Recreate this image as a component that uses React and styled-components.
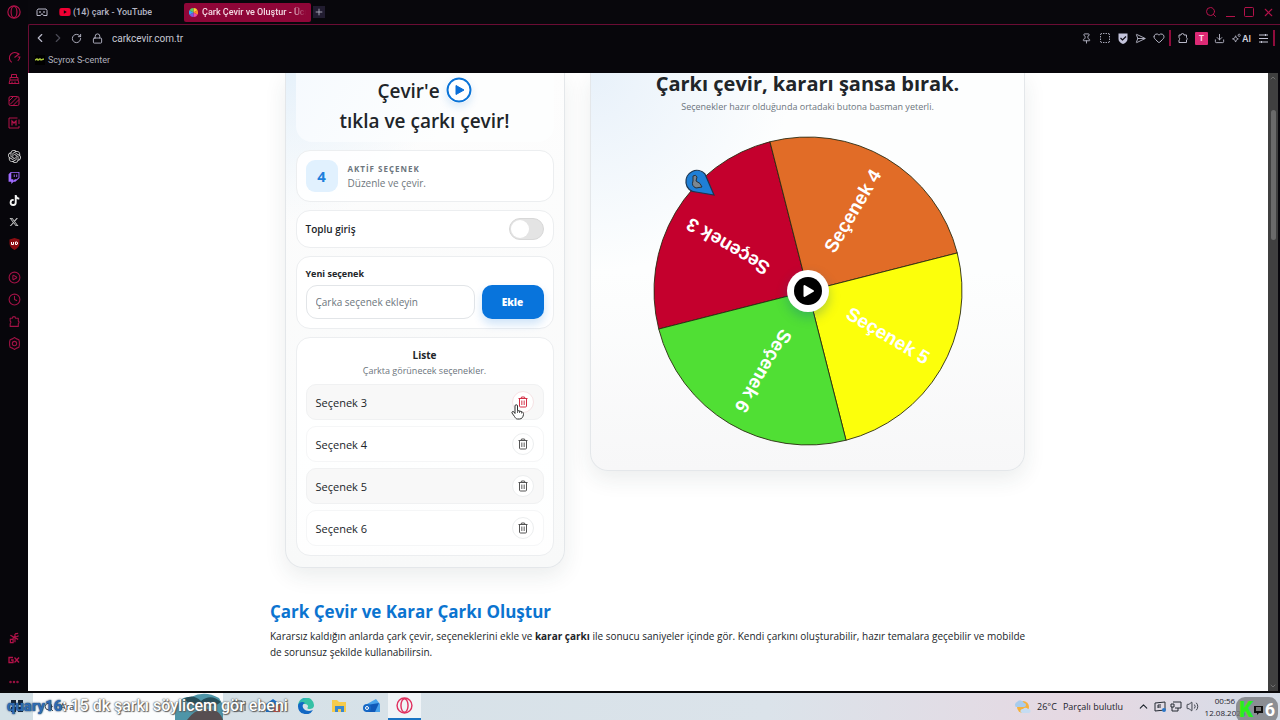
import React, { useState } from 'react';
import styled, { createGlobalStyle } from 'styled-components';
import {
  Search,
  Square,
  X,
  Plus,
  ChevronLeft,
  ChevronRight,
  ChevronUp,
  ChevronDown,
  RotateCw,
  Lock,
  Pin,
  SquareDashed,
  SendHorizontal,
  Heart,
  Download,
  CirclePlay,
  Clock,
  Ellipsis,
  Volume2,
} from 'lucide-react';
import { SiOpenai } from 'react-icons/si';
import { FaTwitch, FaTiktok, FaXTwitter, FaYoutube } from 'react-icons/fa6';

const PINK = '#b3124a';

const OperaIcon = ({ size, color }) => (
  <svg width={size} height={size} viewBox="0 0 24 24" fill="none" stroke={color} strokeWidth="2">
    <circle cx="12" cy="12" r="10.5" />
    <ellipse cx="12" cy="12" rx="5" ry="9.5" />
  </svg>
);

const GaugeIcon = () => (
  <svg width="13" height="13" viewBox="0 0 24 24" fill="none" stroke={PINK} strokeWidth="2">
    <path d="M7 21A10 10 0 1 1 20 6M12 12l9-7M18 18a10 10 0 0 0 4-7h-4" />
  </svg>
);

const CleanerIcon = () => (
  <svg width="12" height="12" viewBox="0 0 24 24" fill="none" stroke={PINK} strokeWidth="2">
    <path d="M7 9V3h10v6M4 9h16v5H4zM4 14l-2 7h20l-2-7M8 17v4M14 17v4" />
  </svg>
);

const WallpaperIcon = () => (
  <svg width="12" height="12" viewBox="0 0 24 24" fill="none" stroke={PINK} strokeWidth="2">
    <rect x="2" y="3" width="20" height="18" rx="3" />
    <path d="M2 12l9-9M4 19L19 4M10 21L22 9" />
  </svg>
);

const ModIcon = () => (
  <svg width="12" height="12" viewBox="0 0 24 24" fill="none" stroke={PINK} strokeWidth="2">
    <path d="M19 2H2v20h20v-4M22 5v9" />
    <path d="M8 17V8l4 4 4-4v9" strokeWidth="2.5" />
  </svg>
);

const PuzzleIcon = ({ size }) => (
  <svg width={size} height={size} viewBox="0 0 24 24" fill="none" stroke="currentColor" strokeWidth="2" strokeLinejoin="round">
    <path d="M4 6h4a3 3 0 0 1 6 0h5v5a3 3 0 0 1 0 5v5H4v-5a3 3 0 0 0 0-5z" />
  </svg>
);

const HexGearIcon = () => (
  <svg width="13" height="13" viewBox="0 0 24 24" fill="none" stroke="currentColor" strokeWidth="2" strokeLinejoin="round">
    <path d="M9 3l3-2 3 2 5 2 1 4v6l-1 4-5 2-3 2-3-2-5-2-1-4V9l1-4z" />
    <circle cx="12" cy="12" r="4" />
  </svg>
);

const ShieldUdIcon = () => (
  <svg width="11" height="12" viewBox="0 0 22 24">
    <path d="M11 0l10 3v8c0 6-4 10-10 13C5 21 1 17 1 11V3z" fill="#8c0d12" />
    <path d="M5 8v5h4V8M13 8v5h3l1-1V9l-1-1z" fill="none" stroke="#fff" strokeWidth="2" />
  </svg>
);

const MusicOffIcon = () => (
  <svg width="11" height="12" viewBox="0 0 24 24" fill="none" stroke={PINK} strokeWidth="2.6">
    <path d="M3 15h6v7H3zM9 22V8M13 3v8l8-4M3 6l17 9M13 12v9M13 3l7-1" />
  </svg>
);

const GxIcon = () => (
  <svg width="12" height="8" viewBox="0 0 24 14" fill="none" stroke={PINK} strokeWidth="2.6">
    <path d="M10 2H2v10h8V7H6M13 2l9 10M22 2l-9 10" />
  </svg>
);

const GogglesIcon = () => (
  <svg width="12" height="9" viewBox="0 0 24 18" fill="none" stroke="#b8b8c8" strokeWidth="2">
    <path d="M4 2h16l2 3v10h-7l-3-4-3 4H2V5z" />
    <circle cx="8" cy="8" r="1" />
    <circle cx="16" cy="8" r="1" />
  </svg>
);

const ColorWheelIcon = () => (
  <svg width="9" height="9" viewBox="-10 -10 20 20">
    <path d="M0 0V-10A10 10 0 0 1 9 -5z" fill="#ffcf33" />
    <path d="M0 0L9 -5A10 10 0 0 1 9 5z" fill="#ff8a2b" />
    <path d="M0 0L9 5A10 10 0 0 1 0 10z" fill="#ef4aa8" />
    <path d="M0 0V10A10 10 0 0 1 -9 5z" fill="#7a5be0" />
    <path d="M0 0L-9 5A10 10 0 0 1 -9 -5z" fill="#34a8f0" />
    <path d="M0 0L-9 -5A10 10 0 0 1 0 -10z" fill="#58cf66" />
  </svg>
);

const ShieldCheckIcon = () => (
  <svg width="10" height="11" viewBox="0 0 20 22">
    <path d="M1 1h18v11c0 5-4 8-9 10-5-2-9-5-9-10z" fill="#c4c4dc" />
    <path d="M5 10l4 4 7-7" fill="none" stroke="#0a0910" strokeWidth="2.4" />
  </svg>
);

const AiIcon = () => (
  <svg width="9" height="10" viewBox="0 0 20 20" fill="none" stroke="#b8b8c8" strokeWidth="1.8">
    <path d="M8 5l2 5 4 2-4 2-2 5-2-5-5-2 5-2z" />
    <circle cx="16" cy="4" r="2.5" />
  </svg>
);

const SlidersIcon = () => (
  <svg width="9" height="9" viewBox="0 0 18 18" fill="none" stroke="#c4c4d4" strokeWidth="2">
    <path d="M0 2h18M0 9h18M0 16h18M13 0v4M5 14v4" />
  </svg>
);

const TrashIcon = () => (
  <svg width="10" height="12" viewBox="0 0 20 24" fill="none" stroke="currentColor" strokeWidth="2">
    <path d="M1 5h18M6 5l1-3h6l1 3M3 5v15a2 2 0 0 0 2 2h10a2 2 0 0 0 2-2V5" />
    <path d="M7 9v9M10 9v9M13 9v9" strokeWidth="1.3" />
  </svg>
);

const HandCursor = () => (
  <Cursor width="13" height="16" viewBox="0 0 26 32">
    <path
      d="M8 19V4a2.500 2.500 0 0 1 5 0v9l8 2c3 1 4 3 4 6-1 5-3 9-8 9h-4c-3 0-4-2-6-5l-5-7c-1-3 2-4 4-2z"
      fill="#fff"
      stroke="#333"
      strokeWidth="2"
    />
    <path d="M13 13v5M17 14v4M21 15v4" stroke="#333" strokeWidth="1.500" />
  </Cursor>
);

const slices = [
  { name: 'Seçenek 3', color: '#c4002d', angle: -149.3 },
  { name: 'Seçenek 4', color: '#e16c27', angle: -59.3 },
  { name: 'Seçenek 5', color: '#fcff0b', angle: 30.7 },
  { name: 'Seçenek 6', color: '#50df34', angle: 120.7 },
];

const Wheel = () => (
  <WheelBox>
    <svg width="310" height="310" viewBox="-155 -155 310 310">
      {slices.map((s) => (
        <g key={s.name} transform={`rotate(${s.angle})`}>
          <path d="M0 0L108.900 -108.900A154 154 0 0 1 108.900 108.900Z" fill={s.color} stroke="#2a2a10" strokeWidth="0.8" />
          <WheelLabel x="138" y="4">
            {s.name}
          </WheelLabel>
        </g>
      ))}
      <g transform="translate(-111 -109)">
        <path
          d="M-11 1A11 11 0 0 1 8 -8L17 13L-1 10A10 10 0 0 1 -11 1Z"
          fill="#1f7fd6"
          stroke="#1c3550"
          strokeWidth="1.200"
        />
        <path d="M-4 -6q3 -2 4 1l-1 4q5 2 6 6l-6 1q-5 -2 -3 -7z" fill="#7b8791" stroke="#26323c" />
      </g>
    </svg>
    <SpinButton type="button" aria-label="Çevir">
      <svg width="28" height="28" viewBox="0 0 28 28">
        <circle cx="14" cy="14" r="14" />
        <path d="M10.500 9v10l8.500-5z" fill="#fff" stroke="#fff" strokeWidth="2" strokeLinejoin="round" />
      </svg>
    </SpinButton>
  </WheelBox>
);

const Sidebar = () => (
  <SidebarContainer>
    <LogoButton type="button" aria-label="Opera">
      <OperaIcon size={14} color={PINK} />
    </LogoButton>
    <SideGroup>
      <SideButton type="button" aria-label="GX Control"><GaugeIcon /></SideButton>
      <SideButton type="button" aria-label="GX Cleaner"><CleanerIcon /></SideButton>
      <SideButton type="button" aria-label="Wallpapers"><WallpaperIcon /></SideButton>
      <SideButton type="button" aria-label="Mods"><ModIcon /></SideButton>
    </SideGroup>
    <SideGroup>
      <SideButton type="button" aria-label="ChatGPT" $color="#d5d5d5"><SiOpenai size={13} /></SideButton>
      <SideButton type="button" aria-label="Twitch" $color="#a06bff"><FaTwitch size={12} /></SideButton>
      <SideButton type="button" aria-label="TikTok" $color="#f2f2f2"><FaTiktok size={11} /></SideButton>
      <SideButton type="button" aria-label="X" $color="#c8c8c8"><FaXTwitter size={10} /></SideButton>
      <SideButton type="button" aria-label="UD"><ShieldUdIcon /></SideButton>
    </SideGroup>
    <SideGroup>
      <SideButton type="button" aria-label="Player"><CirclePlay size={13} /></SideButton>
      <SideButton type="button" aria-label="History"><Clock size={13} /></SideButton>
      <SideButton type="button" aria-label="Extensions"><PuzzleIcon size={13} /></SideButton>
      <SideButton type="button" aria-label="Settings"><HexGearIcon /></SideButton>
    </SideGroup>
    <SideGroup $bottom>
      <SideButton type="button" aria-label="Music"><MusicOffIcon /></SideButton>
      <SideButton type="button" aria-label="GX"><GxIcon /></SideButton>
      <SideButton type="button" aria-label="More"><Ellipsis size={12} strokeWidth={3} /></SideButton>
    </SideGroup>
  </SidebarContainer>
);

const BrowserHeader = () => (
  <header>
    <TabBar>
      <BarButton type="button" aria-label="Workspace"><GogglesIcon /></BarButton>
      <Tab href="#youtube">
        <FaYoutube size={12} color="#f00033" />
        <span>(14) çark - YouTube</span>
      </Tab>
      <Tab href="#cark" $active>
        <ColorWheelIcon />
        <span>Çark Çevir ve Oluştur - Ücretsiz</span>
      </Tab>
      <NewTab type="button" aria-label="New tab"><Plus size={10} /></NewTab>
      <WindowButtons>
        <BarButton type="button" aria-label="Search" $color={PINK}><Search size={12} /></BarButton>
        <BarButton type="button" aria-label="Minimize" $color={PINK}><MinimizeMark /></BarButton>
        <BarButton type="button" aria-label="Maximize" $color={PINK}><Square size={12} /></BarButton>
        <BarButton type="button" aria-label="Close" $color={PINK}><X size={13} /></BarButton>
      </WindowButtons>
    </TabBar>
    <Toolbar>
      <AddressRow>
        <BarButton type="button" aria-label="Back"><ChevronLeft size={14} /></BarButton>
        <BarButton type="button" aria-label="Forward" $color="#4a4a55"><ChevronRight size={14} /></BarButton>
        <BarButton type="button" aria-label="Reload"><RotateCw size={11} /></BarButton>
        <LockSlot><Lock size={11} /></LockSlot>
        <Address aria-label="Address" defaultValue="carkcevir.com.tr" />
        <ToolIcons>
          <BarButton type="button" aria-label="Pin"><Pin size={11} /></BarButton>
          <BarButton type="button" aria-label="Snapshot"><SquareDashed size={12} /></BarButton>
          <BarButton type="button" aria-label="Protection"><ShieldCheckIcon /></BarButton>
          <BarButton type="button" aria-label="Send"><SendHorizontal size={11} /></BarButton>
          <BarButton type="button" aria-label="Favorite"><Heart size={12} /></BarButton>
        </ToolIcons>
        <Divider />
        <ToolIcons>
          <BarButton type="button" aria-label="Extensions"><PuzzleIcon size={12} /></BarButton>
          <Profile type="button">T</Profile>
          <BarButton type="button" aria-label="Downloads"><Download size={11} /></BarButton>
          <AiButton type="button"><AiIcon />AI</AiButton>
          <BarButton type="button" aria-label="Menu"><SlidersIcon /></BarButton>
        </ToolIcons>
        <Divider />
      </AddressRow>
      <Bookmark href="#scyrox">
        <BookmarkIcon><svg width="9" height="4" viewBox="0 0 9 4"><path d="M0 2l2-1 1 1 2-1 1 1 3-1" stroke="#a6c23a" strokeWidth="1.500" fill="none" /></svg></BookmarkIcon>
        Scyrox S-center
      </Bookmark>
    </Toolbar>
  </header>
);

const TaskBar = () => (
  <TaskBarContainer>
    <StartButton type="button" aria-label="Start">
      <svg width="12" height="12" viewBox="0 0 12 12"><path d="M0 0h5v5H0zM7 0h5v5H7zM0 7h5v5H0zM7 7h5v5H7z" fill="#16263a" /></svg>
    </StartButton>
    <TaskSearch>
      <Search size={10} />
      <span>Ara</span>
      <svg width="48" height="27" viewBox="0 0 48 27">
        <path d="M0 13Q6 3 16 4Q30 -3 44 5L48 12V27H0z" fill="#4e95a8" />
        <path d="M8 6Q18 0 26 8Q36 0 46 9L40 13Q28 11 20 14z" fill="#28505c" />
        <path d="M12 27Q22 13 38 17Q45 18 48 27z" fill="#574e51" />
      </svg>
    </TaskSearch>
    <TaskApps>
      <TaskApp type="button" aria-label="Task view">
        <svg width="14" height="12" viewBox="0 0 14 12" fill="none" stroke="#39424a"><path d="M1 1h8v4H1zM1 7h8v4H1zM12 1v10" /></svg>
      </TaskApp>
      <TaskApp type="button" aria-label="Store">
        <svg width="16" height="16" viewBox="0 0 16 16"><path d="M1 6L8 1l7 5v8H1z" fill="#1b70c9" /><path d="M8 7h7v7H8z" fill="#d94737" /><path d="M5 4h4v4H5z" fill="#5cc1f0" /></svg>
      </TaskApp>
      <TaskApp type="button" aria-label="Edge">
        <svg width="16" height="16" viewBox="0 0 16 16">
          <path d="M0 8a8 8 0 0 1 16-1c0 3-2 4-5 4 0 0-1 0-2-1 2-1 1-4-2-4S0 8 0 8z" fill="#35c1a5" />
          <path d="M0 8c0-4 5-5 7-3-4 1-3 8 4 8 2 0 3-1 4-1A8 8 0 0 1 0 8z" fill="#1268c4" />
          <path d="M3 3a8 8 0 0 1 6-3C5 2 1 4 0 8a8 8 0 0 1 3-5z" fill="#2a9ee0" />
        </svg>
      </TaskApp>
      <TaskApp type="button" aria-label="Explorer">
        <svg width="16" height="14" viewBox="0 0 16 14"><path d="M1 1h5l2 2h7v10H1z" fill="#f6cb4c" /><path d="M4 7h9v6h-3v-3H7v3H4z" fill="#3a88cf" /></svg>
      </TaskApp>
      <TaskApp type="button" aria-label="Mail">
        <svg width="18" height="16" viewBox="0 0 18 16"><path d="M4 6L13 1l4 5v8H4z" fill="#49a3ec" /><path d="M4 7l12-2-4 9H3z" fill="#1059b8" /><circle cx="4" cy="10" r="4" fill="#1769c6" /><circle cx="4" cy="10" r="1.500" fill="none" stroke="#fff" /></svg>
      </TaskApp>
      <TaskApp type="button" aria-label="Opera GX" $active><OperaIcon size={17} color="#e0305f" /></TaskApp>
    </TaskApps>
    <Weather type="button">
      <svg width="17" height="16" viewBox="0 0 17 16">
        <circle cx="9" cy="8" r="6" fill="#f4b13d" />
        <path d="M2 8a3 3 0 0 1 1-5 4 4 0 0 1 7 1 2 2 0 0 1 0 4z" fill="#a8ccec" />
        <path d="M8 14a2 2 0 0 1 1-4 3 3 0 0 1 5 0 2 2 0 0 1 1 4z" fill="#c5dcf2" />
      </svg>
      <span>26°C</span>
      <span>Parçalı bulutlu</span>
    </Weather>
    <Tray>
      <ChevronUp size={13} />
      <svg width="12" height="11" viewBox="0 0 12 11" fill="none" stroke="#242a33"><path d="M1 2l10-1v8L1 10zM4 7V4h3M4 6h3" /><circle cx="10" cy="9" r="2" fill="#2b76c8" stroke="none" /></svg>
      <svg width="12" height="11" viewBox="0 0 12 11" fill="none" stroke="#242a33"><path d="M3 1h8v6H5M1 3h3v3H1zM2 6v4h6M8 7v3" /></svg>
      <Volume2 size={13} strokeWidth={1.5} />
    </Tray>
    <ClockText>
      <span>00:56</span>
      <span>12.08.2026</span>
    </ClockText>
    <Caption>
      <b>quary16</b>
      <span>: 15 dk şarkı söylicem gör ebeni</span>
    </Caption>
    <Badge>
      <b>K</b>
      <svg width="11" height="11" viewBox="0 0 11 11"><path d="M1 1h9v7H6l-2 2V8H1z" fill="#111" /><path d="M3 3h5M3 5h5" stroke="#ddd" /></svg>
      <span>6</span>
    </Badge>
  </TaskBarContainer>
);

const App = () => {
  const [bulk, setBulk] = useState(false);
  const [text, setText] = useState('');

  return (
    <Window>
      <GlobalStyle />
      <Browser>
        <Sidebar />
        <BrowserMain>
          <BrowserHeader />
          <Viewport>
            <Page>
              <Columns>
                <OptionsCard>
                  <Hero>
                    Çevir'e{' '}
                    <svg width="26" height="26" viewBox="0 0 26 26" aria-hidden="true">
                      <circle cx="13" cy="13" r="11.500" fill="#fff" stroke="#0b74d8" strokeWidth="2" />
                      <path d="M10 8.500v9l8-4.500z" fill="#0b6fd8" stroke="#0b6fd8" strokeLinejoin="round" />
                    </svg>
                    <br />
                    tıkla ve çarkı çevir!
                  </Hero>
                  <Panel $row>
                    <Count>4</Count>
                    <div>
                      <CountTitle>AKTİF SEÇENEK</CountTitle>
                      <CountHint>Düzenle ve çevir.</CountHint>
                    </div>
                  </Panel>
                  <Panel>
                    <SwitchLabel>
                      Toplu giriş
                      <Switch type="checkbox" checked={bulk} onChange={() => setBulk(!bulk)} />
                    </SwitchLabel>
                  </Panel>
                  <Panel>
                    <FieldLabel htmlFor="option">Yeni seçenek</FieldLabel>
                    <FieldRow>
                      <Field
                        id="option"
                        placeholder="Çarka seçenek ekleyin"
                        value={text}
                        onChange={(e) => setText(e.target.value)}
                      />
                      <AddButton type="button">Ekle</AddButton>
                    </FieldRow>
                  </Panel>
                  <Panel>
                    <ListTitle>Liste</ListTitle>
                    <ListHint>Çarkta görünecek seçenekler.</ListHint>
                    <OptionList>
                      {slices.map((s, i) => (
                        <Option key={s.name} $shaded={i % 2 === 0}>
                          {s.name}
                          <DeleteButton type="button" aria-label={`${s.name} sil`} $hot={i === 0}>
                            <TrashIcon />
                            {i === 0 && <HandCursor />}
                          </DeleteButton>
                        </Option>
                      ))}
                    </OptionList>
                  </Panel>
                </OptionsCard>
                <WheelCard>
                  <WheelTitle>Çarkı çevir, kararı şansa bırak.</WheelTitle>
                  <WheelHint>Seçenekler hazır olduğunda ortadaki butona basman yeterli.</WheelHint>
                  <Wheel />
                </WheelCard>
              </Columns>
              <Article>
                <h2>Çark Çevir ve Karar Çarkı Oluştur</h2>
                <p>
                  Kararsız kaldığın anlarda çark çevir, seçeneklerini ekle ve <b>karar çarkı</b> ile sonucu
                  saniyeler içinde gör. Kendi çarkını oluşturabilir, hazır temalara geçebilir ve mobilde de
                  sorunsuz şekilde kullanabilirsin.
                </p>
              </Article>
            </Page>
            <ScrollBar>
              <ChevronUp size={8} />
              <ScrollThumb />
              <ChevronDown size={8} />
            </ScrollBar>
          </Viewport>
        </BrowserMain>
      </Browser>
      <TaskBar />
    </Window>
  );
};

export default App;

const GlobalStyle = createGlobalStyle`
  * {
    box-sizing: border-box;
  }

  body {
    margin: 0;
    background: #08070c;
    font-family: 'Open Sans', 'Noto Sans', sans-serif;
  }

  button,
  input {
    font-family: inherit;
    margin: 0;
  }

  a {
    color: inherit;
    text-decoration: none;
  }
`;

const Window = styled.div`
  display: flex;
  flex-direction: column;
  height: 100vh;
  overflow: hidden;
`;

const Browser = styled.div`
  display: flex;
  flex: 1;
  min-height: 0;
  border-bottom: 2px solid #08080a;
`;

const SidebarContainer = styled.nav`
  display: flex;
  flex-direction: column;
  gap: 11px;
  width: 28px;
  background: #07060b;
`;

const LogoButton = styled.button`
  display: flex;
  align-items: center;
  justify-content: center;
  height: 24px;
  margin-bottom: 11px;
  padding: 0;
  border: none;
  background: none;
`;

const SideGroup = styled.div`
  display: flex;
  flex-direction: column;
  margin-top: ${(props) => (props.$bottom ? 'auto' : '0')};
  margin-bottom: ${(props) => (props.$bottom ? '-2px' : '0')};
`;

const SideButton = styled.button`
  display: flex;
  align-items: center;
  justify-content: center;
  height: 22px;
  padding: 0;
  border: none;
  background: none;
  color: ${(props) => props.$color || '#a01245'};
`;

const BrowserMain = styled.div`
  display: flex;
  flex: 1;
  flex-direction: column;
  min-width: 0;
`;

const TabBar = styled.div`
  display: flex;
  align-items: center;
  height: 24px;
  padding: 0 4px 0 5px;
  background: #08070c;
`;

const BarButton = styled.button`
  display: flex;
  align-items: center;
  justify-content: center;
  width: 18px;
  height: 18px;
  padding: 0;
  border: none;
  background: none;
  color: ${(props) => props.$color || '#b8b8c8'};
`;

const Tab = styled.a`
  display: flex;
  align-items: center;
  gap: ${(props) => (props.$active ? '4px' : '2px')};
  width: 127px;
  height: 19px;
  margin-left: ${(props) => (props.$active ? '0' : '6px')};
  padding: 0 5px 0 ${(props) => (props.$active ? '5px' : '2px')};
  border-radius: 2px;
  background: ${(props) => (props.$active ? '#8f0638' : 'transparent')};
  color: ${(props) => (props.$active ? '#f3dbe4' : '#b4b4c2')};
  font: 500 9px/19px Roboto, sans-serif;

  svg {
    flex: none;
  }

  span {
    overflow: hidden;
    white-space: nowrap;
    mask-image: ${(props) => (props.$active ? 'linear-gradient(90deg, #000 85%, transparent)' : 'none')};
  }
`;

const NewTab = styled(BarButton)`
  width: 12px;
  height: 12px;
  margin-left: 2px;
  background: #211c30;
`;

const WindowButtons = styled.div`
  display: flex;
  gap: 1px;
  margin-left: auto;
  margin-right: -1px;
`;

const MinimizeMark = styled.span`
  width: 9px;
  height: 1px;
  margin-top: 8px;
  background: ${PINK};
`;

const Toolbar = styled.div`
  height: 49px;
  border-top: 1px solid #6a0c34;
  border-left: 1px solid #6a0c34;
  border-radius: 2px 0 0 0;
  background: #07060b;
`;

const AddressRow = styled.div`
  display: flex;
  align-items: center;
  height: 26px;
  padding: 0 2px;
`;

const LockSlot = styled.span`
  display: flex;
  margin: 0 9px 0 7px;
  color: #b8b8c8;
`;

const Address = styled.input`
  flex: 1;
  min-width: 0;
  padding: 0;
  border: none;
  outline: none;
  background: none;
  color: #c6c6d2;
  font: 10px Roboto, sans-serif;
`;

const ToolIcons = styled.div`
  display: flex;
  align-items: center;
`;

const Divider = styled.i`
  width: 2px;
  height: 16px;
  margin: 0 3px 0 1px;
  background: #8f0c3c;
`;

const Profile = styled.button`
  width: 13px;
  height: 13px;
  margin: 0 3px;
  padding: 0;
  border: none;
  border-radius: 1px;
  background: #dc2a75;
  color: #ffd6e6;
  font: 700 8px/13px Inter, sans-serif;
`;

const AiButton = styled.button`
  display: flex;
  align-items: center;
  gap: 1px;
  padding: 0 3px;
  border: none;
  background: none;
  color: #d0d0dc;
  font: 600 9px Inter, sans-serif;
`;

const Bookmark = styled.a`
  display: flex;
  align-items: center;
  gap: 3px;
  width: fit-content;
  height: 18px;
  padding-left: 6px;
  color: #b0b0bc;
  font: 9px Roboto, sans-serif;
`;

const BookmarkIcon = styled.span`
  display: flex;
  align-items: center;
  width: 10px;
  height: 10px;
  background: #000;
`;

const Viewport = styled.div`
  display: flex;
  flex: 1;
  min-height: 0;
  background: #fff;
`;

const Page = styled.main`
  flex: 1;
  min-width: 0;
  overflow: hidden;
  color: #212529;
`;

const Columns = styled.div`
  display: grid;
  grid-template-columns: 307px 1fr;
  gap: 12px;
  align-items: start;
  max-width: 754px;
  margin: 0 auto;
`;

const Card = styled.section`
  border: 1px solid #e4e7ea;
  border-top: none;
  box-shadow: 0 8px 22px rgba(30, 50, 60, 0.09);
`;

const OptionsCard = styled(Card)`
  display: flex;
  flex-direction: column;
  justify-self: center;
  gap: 8px;
  width: 280px;
  padding: 0 10px 11px;
  border-radius: 0 0 18px 18px;
  background:
    radial-gradient(circle at 0 0, #e6f1fa, transparent 150px),
    linear-gradient(#fdfdfd, #f8f9f9);
`;

const Hero = styled.h1`
  margin: 0;
  padding: 3px 0 6px;
  border-radius: 0 0 16px 16px;
  background: linear-gradient(120deg, #f6fafe, #fdfefe 60%);
  font-size: 19px;
  font-weight: 600;
  line-height: 30px;
  text-align: center;

  svg {
    margin-left: 1px;
    border-radius: 50%;
    vertical-align: -5px;
    box-shadow: 0 4px 8px rgba(11, 116, 216, 0.15);
  }
`;

const Panel = styled.div`
  display: ${(props) => (props.$row ? 'flex' : 'block')};
  align-items: center;
  gap: 10px;
  padding: 9px;
  border: 1px solid #eceef0;
  border-radius: 14px;
  background: rgba(255, 255, 255, 0.85);
`;

const Count = styled.strong`
  width: 32px;
  height: 32px;
  border-radius: 9px;
  background: #e1f1fe;
  color: #1d7fdc;
  font-size: 15px;
  line-height: 32px;
  text-align: center;
`;

const CountTitle = styled.div`
  color: #6c757d;
  font-size: 8px;
  font-weight: 700;
  letter-spacing: 1px;
  line-height: 14px;
`;

const CountHint = styled.div`
  color: #6f777e;
  font-size: 10px;
  line-height: 14px;
`;

const SwitchLabel = styled.label`
  display: flex;
  align-items: center;
  justify-content: space-between;
  height: 18px;
  font-size: 10px;
  font-weight: 600;
`;

const Switch = styled.input`
  display: flex;
  align-items: center;
  width: 35px;
  height: 22px;
  padding: 1px;
  border: 1px solid #d8d8d8;
  border-radius: 11px;
  background: #e4e4e4;
  appearance: none;

  &::before {
    content: '';
    width: 18px;
    height: 18px;
    border-radius: 50%;
    background: #fff;
  }

  &:checked {
    justify-content: flex-end;
    background: #0b74d8;
  }
`;

const FieldLabel = styled.label`
  display: block;
  margin-bottom: 4px;
  font-size: 9px;
  font-weight: 700;
  line-height: 15px;
`;

const FieldRow = styled.div`
  display: flex;
  gap: 7px;
`;

const Field = styled.input`
  flex: 1;
  min-width: 0;
  height: 34px;
  padding: 0 9px;
  border: 1px solid #e2e5e8;
  border-radius: 11px;
  background: #fff;
  font-size: 10px;

  &::placeholder {
    color: #6c757d;
  }
`;

const AddButton = styled.button`
  width: 62px;
  height: 34px;
  padding: 0;
  border: none;
  border-radius: 10px;
  background: #0874dc;
  box-shadow: 0 5px 10px rgba(8, 116, 220, 0.2);
  color: #fff;
  font-size: 10px;
  font-weight: 800;
`;

const ListTitle = styled.h2`
  margin: 0;
  font-size: 10px;
  font-weight: 700;
  line-height: 16px;
  text-align: center;
`;

const ListHint = styled.p`
  margin: 0 0 5px;
  color: #6c757d;
  font-size: 9px;
  line-height: 16px;
  text-align: center;
`;

const OptionList = styled.ul`
  display: flex;
  flex-direction: column;
  gap: 6px;
  margin: 0;
  padding: 0;
  list-style: none;
`;

const Option = styled.li`
  display: flex;
  align-items: center;
  justify-content: space-between;
  height: 36px;
  padding: 0 9px;
  border: 1px solid ${(props) => (props.$shaded ? '#f0f1f2' : '#f5f6f7')};
  border-radius: 10px;
  background: ${(props) => (props.$shaded ? '#f8f8f8' : '#fff')};
  font-size: 11px;
`;

const DeleteButton = styled.button`
  position: relative;
  display: flex;
  align-items: center;
  justify-content: center;
  width: 22px;
  height: 22px;
  padding: 0;
  border: 1px solid ${(props) => (props.$hot ? '#f6e3e5' : '#eceeef')};
  border-radius: 50%;
  background: #fff;
  color: ${(props) => (props.$hot ? '#d32f45' : '#555')};
`;

const Cursor = styled.svg`
  position: absolute;
  top: 12px;
  left: -2px;
`;

const WheelCard = styled(Card)`
  display: flex;
  flex-direction: column;
  align-items: center;
  padding-bottom: 24px;
  border-radius: 0 0 18px 18px;
  background:
    radial-gradient(circle at 0 0, #e8f1fa, transparent 200px),
    linear-gradient(#fdfefe 50%, #f7f7f8);
`;

const WheelTitle = styled.h2`
  margin: 0;
  font-size: 20px;
  font-weight: 700;
  line-height: 22px;
`;

const WheelHint = styled.p`
  margin: 4px 0 21px;
  color: #6c757d;
  font-size: 9px;
  line-height: 16px;
`;

const WheelBox = styled.div`
  position: relative;
  display: flex;
`;

const WheelLabel = styled.text`
  fill: #fff;
  font: 700 19px 'Liberation Sans', Arial, sans-serif;
  text-anchor: end;
`;

const SpinButton = styled.button`
  position: absolute;
  inset: 0;
  display: flex;
  align-items: center;
  justify-content: center;
  width: 42px;
  height: 42px;
  margin: auto;
  padding: 0;
  border: none;
  border-radius: 50%;
  background: #fff;
  box-shadow: 0 5px 12px rgba(0, 90, 160, 0.3);
`;

const Article = styled.article`
  max-width: 756px;
  margin: 32px auto 0;

  h2 {
    margin: 0 0 4px;
    color: #0b74d0;
    font-size: 17px;
    font-weight: 700;
    line-height: 24px;
  }

  p {
    margin: 0;
    font-size: 10px;
    line-height: 16px;
  }
`;

const ScrollBar = styled.div`
  display: flex;
  flex-direction: column;
  align-items: center;
  width: 12px;
  padding: 1px 0;
  border-right: 2px solid #08070c;
  background: #404040;
  color: #858585;
`;

const ScrollThumb = styled.div`
  width: 5px;
  height: 130px;
  margin: 28px 0 auto;
  border-radius: 3px;
  background: #6a6a6a;
`;

const TaskBarContainer = styled.footer`
  position: relative;
  display: flex;
  align-items: center;
  height: 27px;
  background: linear-gradient(90deg, #d3e0e6, #dbe3ea 60%, #e6d8e2 85%, #d5dde8);
  color: #1c232b;
`;

const StartButton = styled.button`
  width: 33px;
  height: 27px;
  padding: 0;
  border: none;
  background: none;
`;

const TaskSearch = styled.div`
  display: flex;
  align-items: center;
  gap: 6px;
  width: 190px;
  height: 27px;
  padding-left: 11px;
  background: #fbfcfd;
  font-size: 9px;

  svg:last-child {
    margin-left: auto;
  }
`;

const TaskApps = styled.div`
  display: flex;
`;

const TaskApp = styled.button`
  display: flex;
  align-items: center;
  justify-content: center;
  width: 33px;
  height: 27px;
  padding: 0;
  border: none;
  border-bottom: 2px solid ${(props) => (props.$active ? '#1a74c4' : 'transparent')};
  background: ${(props) => (props.$active ? '#f0f4f7' : 'none')};
`;

const Weather = styled.button`
  display: flex;
  align-items: center;
  gap: 6px;
  margin-left: auto;
  padding: 0;
  border: none;
  background: none;
  color: inherit;
  font-size: 9px;
`;

const Tray = styled.div`
  display: flex;
  align-items: center;
  gap: 4px;
  margin-left: 14px;
`;

const ClockText = styled.div`
  display: flex;
  flex-direction: column;
  align-items: center;
  width: 42px;
  margin: 0 34px 0 5px;
  font-size: 8px;
  line-height: 12px;
`;

const Caption = styled.div`
  position: absolute;
  top: 3px;
  left: 7px;
  color: #fff;
  font: 500 16px/20px Roboto, sans-serif;
  text-shadow: 0 0 1px #555, 0 0 2px #555, 1px 1px 1px #666;
  white-space: nowrap;

  b {
    color: #2f6cb3;
    font-size: 15px;
    text-shadow: 0 0 1px #16365e, 0 0 2px #16365e;
  }
`;

const Badge = styled.div`
  position: absolute;
  top: 4px;
  right: 2px;
  display: flex;
  align-items: center;
  justify-content: space-between;
  width: 42px;
  height: 26px;
  padding: 0 3px;
  border-radius: 9px;
  background: rgba(120, 122, 126, 0.8);
  color: #fff;
  font: 700 18px/24px Roboto, sans-serif;

  b {
    color: #2bef1c;
    font-weight: 900;
    font-size: 22px;
  }
`;
